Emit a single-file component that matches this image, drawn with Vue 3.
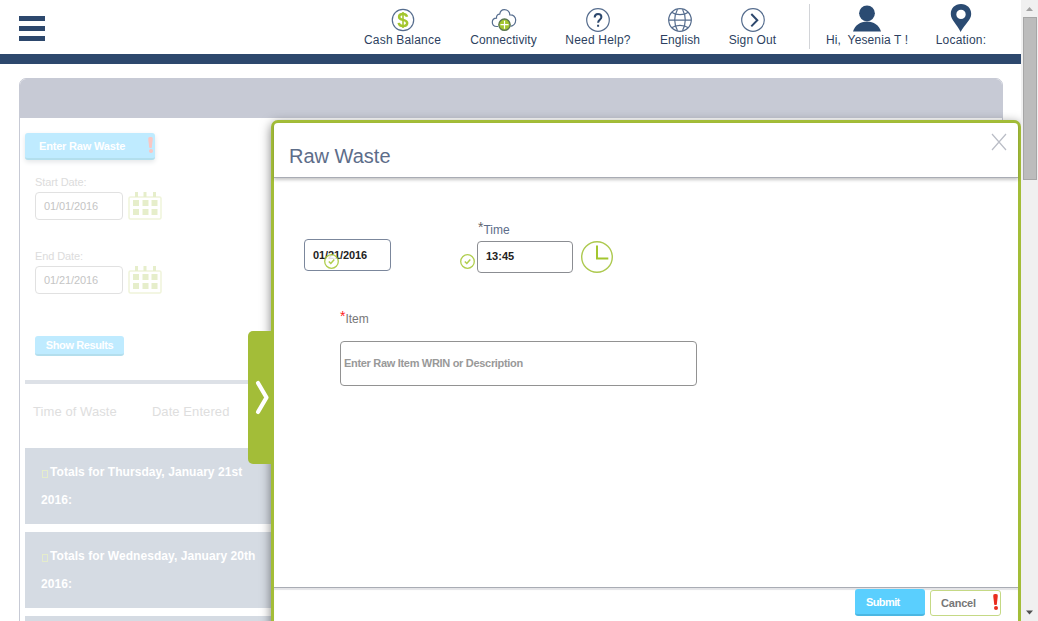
<script setup>
const totals = [
  { day: 'Totals for Thursday, January 21st', year: '2016:' },
  { day: 'Totals for Wednesday, January 20th', year: '2016:' },
  { day: '', year: '' }
]
const dates = [
  { label: 'Start Date:', value: '01/01/2016' },
  { label: 'End Date:', value: '01/21/2016' }
]
</script>

<template>
  <div class="window">
    <div class="page">
      <header class="topbar">
        <div class="burger"><i></i><i></i><i></i></div>
        <nav class="nav">
          <a class="nav-item">
            <svg width="24" height="24" viewBox="0 0 24 24"><circle cx="12" cy="12" r="10.7" class="thin" /><path class="dollar" d="M16 8.800C15.600 6.900 14.200 6 12 6c-2.300 0-3.900 1.100-3.900 2.900 0 2 1.700 2.500 3.900 3s4.200 1.100 4.200 3.200c0 1.900-1.700 3-4.200 3s-4-1.100-4.300-3.200" /><path class="dollar bar" d="M12 4v16" /></svg>
            <span>Cash Balance</span>
          </a>
          <a class="nav-item tight">
            <svg width="26" height="24" viewBox="0 0 26 24"><path class="thin cloud" d="M7 18.5H5.800C3.200 18.500 1.300 16.700 1.300 14.300c0-2.500 1.900-4 4.200-4.100C5.200 7.500 7 6 8.700 6.200 9.200 3.400 11 1.700 13.300 1.700c3.300 0 5.600 2.100 5.500 5.200 3.600-.2 5.900 2 5.900 5.200 0 3.500-2.400 5.900-5.200 6.200" /><circle cx="13.500" cy="16.700" r="5.700" class="plus-disc" /><path d="M13.500 12.700v8M9.500 16.700h8" class="plus" /></svg>
            <span>Connectivity</span>
          </a>
          <a class="nav-item">
            <svg width="24" height="24" viewBox="0 0 24 24"><circle cx="12" cy="12" r="11.300" class="thin" /><path d="M8.700 9.500C8.700 7.300 9.900 6 12 6s3.400 1.200 3.400 3c0 2.700-3.300 2.900-3.300 5.800M12.100 16.700v2.100" class="question" /></svg>
            <span>Need Help?</span>
          </a>
          <a class="nav-item tight">
            <svg width="24" height="24" viewBox="0 0 24 24"><g class="thin"><circle cx="12" cy="12" r="11.300" /><path d="M9.500 1.200C6 8 6 16 9.500 22.800M14.500 1.200C18 8 18 16 14.500 22.800" /><path d="M.7 12.200h22.600M3.700 4.300c4.300 3.200 12.300 3.200 16.600 0M3.700 19.700c4.300-3.200 12.300-3.200 16.600 0" /></g></svg>
            <span>English</span>
          </a>
          <a class="nav-item tight">
            <svg width="24" height="24" viewBox="0 0 24 24"><circle cx="12" cy="12" r="11.300" class="thin" /><path d="M10.300 6l6 6.200-6 6.200" class="question" /></svg>
            <span>Sign Out</span>
          </a>
          <div class="divider"></div>
          <a class="nav-item tight">
            <svg class="tall" width="28" height="27" viewBox="0 0 28 27"><circle cx="14" cy="8.800" r="7.900" class="solid" /><path class="solid" d="M0 27C2 20.800 7.200 17 14 17s12 3.800 14 10z" /></svg>
            <span class="greeting">Hi,&nbsp; Yesenia T !</span>
          </a>
          <a class="nav-item">
            <svg class="tall" width="22" height="28" viewBox="0 0 22 28"><path fill-rule="evenodd" class="solid" d="M11 0C4.900 0 .8 4.300.8 9.900.8 15.700 7 20.300 10.600 28 14.700 20.300 21.200 15.700 21.200 9.900 21.200 4.300 17 0 11 0zm0 5.700a4.700 4.700 0 1 1 0 9.400 4.700 4.700 0 0 1 0-9.400z" /></svg>
            <span>Location:</span>
          </a>
        </nav>
      </header>

      <main class="panel">
        <div class="panel-head"></div>
        <section class="faded">
          <button class="btn enter">Enter Raw Waste<b class="bang"><i></i><i></i></b></button>
          <div v-for="d in dates" :key="d.label" class="date-field">
            <label>{{ d.label }}</label>
            <div class="date-row">
              <div class="date-box">{{ d.value }}</div>
              <svg width="34" height="28" viewBox="0 0 34 28"><rect x="1" y="5" width="32" height="22" rx="1.500" class="cal-frame" /><path class="cal-fill" d="M7 0h3v5H7zM15.500 0h3v5h-3zM25 0h3v5h-3zM5 8h6v6H5zM14.500 8h6v6h-6zM23.500 8h6v6h-6zM5 17h6v6H5zM14.500 17h6v6h-6zM23.500 17h6v6h-6z" /></svg>
            </div>
          </div>
          <button class="btn show">Show Results</button>
          <div class="rule"></div>
          <div class="columns"><span>Time of Waste</span><span>Date Entered</span></div>
          <div v-for="(t, n) in totals" :key="n" class="total">
            <div v-if="t.day"><i class="glyph"></i>{{ t.day }}</div>
            <div>{{ t.year }}</div>
          </div>
        </section>
      </main>
    </div>

    <div class="drawer">
      <div class="handle">
        <svg width="16" height="38" viewBox="0 0 16 38"><path d="M4 4l8.500 14.500L4 33" /></svg>
      </div>
      <div class="drawer-head">
        <h1>Raw Waste</h1>
        <svg width="16" height="18" viewBox="0 0 16 18"><path d="M1 1l14 16M15 1L1 17" /></svg>
      </div>
      <div class="form">
        <div class="when">
          <div class="field date-in">01/21/2016
            <svg class="check over" width="15" height="15" viewBox="0 0 15 15"><circle cx="7.500" cy="7.500" r="6.800" /><path d="M4.800 7.500l2 2 3.500-4" /></svg>
          </div>
          <svg class="check" width="15" height="15" viewBox="0 0 15 15"><circle cx="7.500" cy="7.500" r="6.800" /><path d="M4.800 7.500l2 2 3.500-4" /></svg>
          <div class="time">
            <label><sup>*</sup>Time</label>
            <div class="field time-in">13:45</div>
          </div>
          <svg class="clock" width="32" height="32" viewBox="0 0 32 32"><circle cx="16" cy="16" r="15.300" /><path d="M16 4.500v13h11.300" /></svg>
        </div>
        <label class="item-label"><sup>*</sup>Item</label>
        <div class="item-in">Enter Raw Item WRIN or Description</div>
      </div>
      <footer class="foot">
        <button class="btn submit">Submit</button>
        <button class="cancel">Cancel<b class="bang"><i></i><i></i></b></button>
      </footer>
    </div>

    <div class="scroll">
      <svg width="17" height="17" viewBox="0 0 17 17"><path d="M5 11l3.500-4 3.500 4z" fill="#a3a3a3" /></svg>
      <div class="thumb"></div>
      <svg class="down" width="17" height="17" viewBox="0 0 17 17"><path d="M5 6.500h7L8.500 10.500z" fill="#505050" /></svg>
    </div>
  </div>
</template>

<style>
body { background: #fff; overflow: hidden; }
</style>

<style scoped>
* { box-sizing: border-box; }
.window { position: relative; display: flex; width: 1038px; height: 621px; overflow: hidden; font-family: "Liberation Sans", Arial, sans-serif; background: #fff; }
.page { width: 1021px; height: 621px; }
svg { display: block; }
button { font-family: inherit; margin: 0; padding: 0; }
.topbar { height: 64px; border-bottom: 10px solid #2d486d; display: flex; }
.burger { width: 27px; margin: 16px 0 0 19px; display: flex; flex-direction: column; gap: 5px; height: 26px; }
.burger i { height: 5px; width: 26px; background: #2d486d; }
.nav { margin-left: 306px; display: grid; grid-template-columns: 101px 101px 88px 76px 91px 1px 114px 74px; }
.nav-item { display: flex; flex-direction: column; align-items: center; padding-top: 8px; color: #2d3f60; font-size: 12px; line-height: 14px; letter-spacing: .2px; white-space: nowrap; }
.tight { letter-spacing: .1px; }
.nav-item:nth-child(5) { padding-right: 22px; }
.nav-item svg { height: 24px; margin-bottom: 1px; }
.nav-item .tall { height: 28px; margin: -4px 0 1px; }
.nav-item .greeting { letter-spacing: .12px; }
.divider { width: 1px; height: 45px; margin-top: 4px; background: #d2d4d8; }
.thin { fill: none; stroke: #566d8e; stroke-width: 1.200; }
.dollar { fill: none; stroke: #a3c62f; stroke-width: 2.500; }
.bar { stroke-width: 1.600; }
.plus-disc { fill: #a3c62f; stroke: #5a7550; stroke-width: 1.300; }
.plus { stroke: #fff; stroke-width: 1.200; }
.question { fill: none; stroke: #2d486d; stroke-width: 2; }
.solid { fill: #2b4b72; }

.panel { margin: 14px 18px 0 19px; height: 560px; border: 1px solid #c7cad5; border-radius: 7px 7px 0 0; overflow: hidden; }
.panel-head { height: 39px; background: #c7cad5; }
.faded { padding: 15px 0 0 5px; width: 260px; }
.btn { display: block; border: 0; border-radius: 3px; color: #fff; font-weight: 700; font-size: 11px; }
.enter { position: relative; width: 130px; height: 27px; padding-left: 14px; text-align: left; background: #bfebff; border-bottom: 2px solid #b3dfed; box-shadow: 0 2px 5px #e3e6e8; letter-spacing: -.18px; }
.bang { position: absolute; right: 2px; top: 4px; width: 5px; height: 16px; display: flex; flex-direction: column; align-items: center; gap: 1px; }
.bang i { background: #fbc6c2; border-radius: 50%; width: 4px; height: 4px; }
.bang i:first-child { height: 11px; width: 5px; border-radius: 2px; clip-path: polygon(0 0, 100% 0, 75% 100%, 25% 100%); }
.date-field { margin-left: 10px; height: 74px; }
.enter + .date-field { margin-top: 16px; }
.date-field label { display: block; font-size: 11px; line-height: 13px; color: #dcdcdc; letter-spacing: -.1px; }
.date-row { display: flex; gap: 5px; margin-top: 3px; }
.date-box { width: 88px; height: 28px; border: 1px solid #e1e1e1; border-radius: 4px; padding-left: 8px; font-size: 11px; line-height: 27px; color: #c5c5c5; letter-spacing: -.1px; }
.cal-frame { fill: none; stroke: #eff4da; stroke-width: 1.500; }
.cal-fill { fill: #e6eecb; }
.show { width: 89px; height: 20px; margin: 12px 0 0 10px; background: #bfebff; border-bottom: 2px solid #b3deed; letter-spacing: -.4px; }
.rule { height: 4px; margin-top: 24px; background: #dde1e7; }
.columns { display: flex; height: 64px; padding: 20px 0 0 8px; gap: 35px; font-size: 13px; line-height: 15px; color: #dedede; white-space: nowrap; letter-spacing: .08px; }
.total { height: 76px; margin-bottom: 8px; background: #d5dbe3; padding: 10px 0 0 16px; color: #fff; font-size: 12px; font-weight: 700; line-height: 28px; white-space: nowrap; letter-spacing: .06px; }
.glyph { display: inline-block; width: 6px; height: 8px; margin: 0 2px -2px 1px; border: 1px solid #e4eccc; }

/* The drawer slides over the page and continues past the lower edge. */
.drawer { position: absolute; left: 271px; top: 120px; width: 750px; height: 510px; background: #fff; border: 3px solid #a3bd38; border-radius: 7px 7px 0 0; box-shadow: 0 3px 11px rgba(0, 0, 0, .5); clip-path: inset(-12px 0 0 -26px); }
.handle { position: absolute; left: -26px; top: 208px; width: 26px; height: 133px; background: #a3bd38; border-radius: 5px 0 0 5px; padding: 48px 0 0 6px; }
.handle path { fill: none; stroke: #fff; stroke-width: 4.200; stroke-linecap: round; stroke-linejoin: round; }
.drawer-head { height: 55px; display: flex; justify-content: space-between; padding: 10px 11px 0 15px; border-bottom: 1px solid #a9acb4; box-shadow: 0 2px 3px rgba(0, 0, 0, .22); }
.drawer-head h1 { margin: 12px 0 0; font-size: 20px; line-height: 23px; font-weight: 400; color: #5d6d89; }
.drawer-head path { stroke: #babdc6; stroke-width: 1.200; }
.form { height: 409px; padding-top: 44px; }
.when { display: flex; height: 73px; padding-left: 30px; }
.field { border: 1px solid #7b879c; border-radius: 4px; height: 32px; font-size: 11px; line-height: 31px; font-weight: 700; color: #222; padding-left: 8px; }
.date-in { position: relative; width: 87px; margin: 17px 69px 0 0; letter-spacing: -.1px; }
.check { flex: none; margin: 32px 2px 0 0; opacity: .85; }
.over { position: absolute; left: 19px; top: 14px; margin: 0; }
.check circle { fill: none; stroke: #a3c62f; stroke-width: 1.300; }
.over circle { fill: #fff; }
.check path { fill: none; stroke: #a3c62f; stroke-width: 1.500; }
.time { width: 96px; }
.time label { display: block; height: 19px; color: #5d6d89; font-size: 12px; line-height: 16px; padding-left: 1px; }
.time-in { border-color: #8b8d92; line-height: 29px; }
sup { font-size: 14px; line-height: 0; vertical-align: 2px; color: #666; }
.clock { margin: 19px 0 0 8px; }
.clock circle { fill: none; stroke: #adc94f; stroke-width: 1.400; }
.clock path { fill: none; stroke: #a3c62f; stroke-width: 2; }
.item-label { display: block; margin: 16px 0 0 66px; height: 30px; font-size: 12px; line-height: 16px; color: #777; }
.item-label sup { color: #f22; }
.item-in { width: 357px; height: 45px; margin-left: 66px; border: 1px solid #929292; border-radius: 4px; padding-left: 3px; font-size: 11px; font-weight: 700; line-height: 43px; color: #999; letter-spacing: -.31px; white-space: nowrap; }
.foot { height: 40px; border-top: 1px solid #a9acb4; box-shadow: inset 0 2px 1px #e4e4e7; display: flex; gap: 5px; padding: 1px 0 0 581px; }
.submit { position: relative; width: 70px; height: 27px; padding: 0 0 0 11px; text-align: left; background: #5acffe; border-bottom: 2px solid #4bb7e2; letter-spacing: -.6px; }
.cancel { position: relative; width: 71px; height: 26px; margin-top: 1px; border: 1px solid #c5d985; border-radius: 3px; background: #fff; text-align: left; padding-left: 10px; font-size: 11px; font-weight: 700; color: #777; letter-spacing: -.2px; }
.cancel .bang { right: 2px; top: 3px; }
.cancel .bang i { background: #e92d20; }
.scroll { width: 17px; height: 621px; background: #f0f0f0; display: flex; flex-direction: column; }
.thumb { width: 14px; height: 163px; margin-left: 2px; background: #bcbcbc; border: 1px solid #a6a6a6; }
.down { margin-top: auto; }
</style>
